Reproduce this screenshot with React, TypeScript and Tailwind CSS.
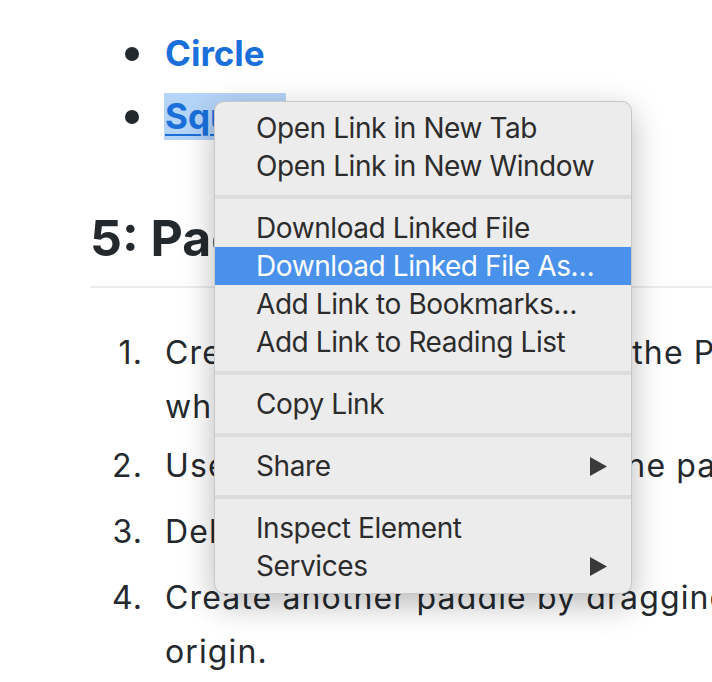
import React from "react";

const Arrow = () => (
  <svg width="17" height="19" viewBox="0 0 17 19" className="ml-auto">
    <polygon points="0,0 17,9.5 0,19" fill="#3a3a3a" />
  </svg>
);

type Item = { label: string; sub?: boolean; active?: boolean } | "sep";

const items: Item[] = [
  { label: "Open Link in New Tab" },
  { label: "Open Link in New Window" },
  "sep",
  { label: "Download Linked File" },
  { label: "Download Linked File As…", active: true },
  { label: "Add Link to Bookmarks…" },
  { label: "Add Link to Reading List" },
  "sep",
  { label: "Copy Link" },
  "sep",
  { label: "Share", sub: true },
  "sep",
  { label: "Inspect Element" },
  { label: "Services", sub: true },
];

export default function App() {
  return (
    <div className="relative w-[712px] h-[682px] overflow-hidden bg-white text-[#24292e] font-['Inter',sans-serif]">
      <ul className="pt-[30px]">
        <li className="flex items-center h-[47px] pl-[125px]">
          <span className="w-[14px] h-[14px] rounded-full bg-[#24292e] shrink-0" />
          <span className="ml-[26px] text-[35px] leading-[47px] font-bold text-[#1a6fdb]">Circle</span>
        </li>
        <li className="flex items-center h-[47px] pl-[125px] mt-[16px]">
          <span className="w-[14px] h-[14px] rounded-full bg-[#24292e] shrink-0" />
          <span className="ml-[25px] pl-px text-[35px] leading-[47px] font-bold text-[#1a6fdb] underline decoration-2 underline-offset-[5px] bg-[#b4d4f8]">
            Square
          </span>
        </li>
      </ul>

      <h2 className="mt-[68px] ml-[90px] text-[50px] leading-[60px] font-bold pb-[18px] border-b-2 border-[#eaecef] whitespace-nowrap">
        5: Paddles and Ball
      </h2>

      <ol className="mt-[38px] text-[32px] leading-[54px] whitespace-nowrap tracking-[0.035em]">
        <li className="flex">
          <span className="ml-[100px] w-[43px] text-right shrink-0">1.</span>
          <span className="ml-[22px]">
            Create a paddle sprite using the Paint editor,
            <br />
            which will be the left paddle.
          </span>
        </li>
        <li className="flex mt-[5px]">
          <span className="ml-[100px] w-[43px] text-right shrink-0">2.</span>
          <span className="ml-[22px]">Use the Move blocks to set the paddle position.</span>
        </li>
        <li className="flex mt-[12px]">
          <span className="ml-[100px] w-[43px] text-right shrink-0">3.</span>
          <span className="ml-[22px]">Delete the cat sprite.</span>
        </li>
        <li className="flex mt-[12px]">
          <span className="ml-[100px] w-[43px] text-right shrink-0">4.</span>
          <span className="ml-[22px]">
            Create another paddle by dragging a copy to the
            <br />
            origin.
          </span>
        </li>
      </ol>

      <div className="absolute left-[214px] top-[101px] w-[418px] rounded-[10px] bg-[#ececec] border border-black/15 pt-[7px] pb-[8px] shadow-[0_10px_32px_rgba(0,0,0,0.28)] text-[28px] tracking-[-0.015em] text-[#2c2c2c]">
        {items.map((it, i) =>
          it === "sep" ? (
            <div key={i} className="py-[10px]">
              <div className="h-[4px] bg-[#dcdcdc]" />
            </div>
          ) : (
            <div
              key={i}
              className={
                it.active
                  ? "h-[38px] flex items-center pl-[41px] pr-[24px] bg-[#4a91ec] text-white"
                  : "h-[38px] flex items-center pl-[41px] pr-[24px]"
              }
            >
              <span>{it.label}</span>
              {it.sub ? <Arrow /> : null}
            </div>
          )
        )}
      </div>
    </div>
  );
}
